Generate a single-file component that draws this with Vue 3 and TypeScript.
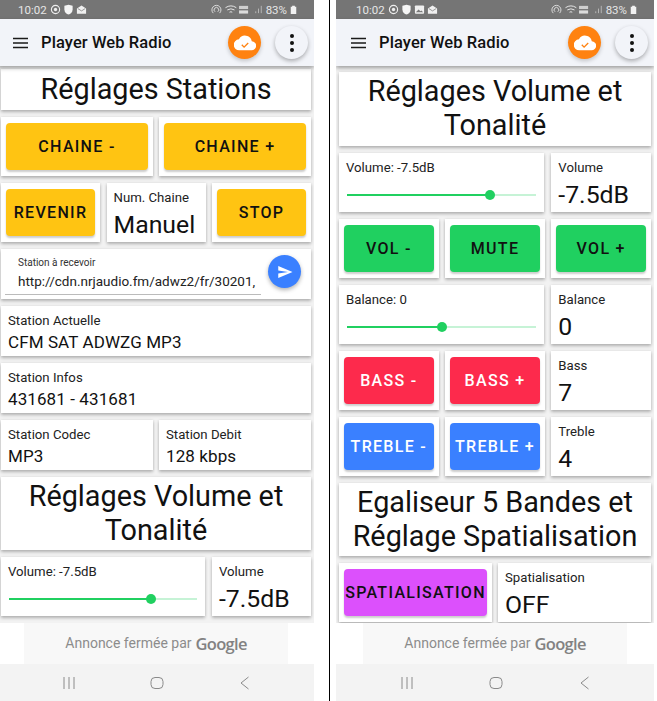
<script setup lang="ts">
const p1Status = ['timer', 'shield', 'mail']
const p2Status = ['timer', 'shield', 'image', 'mail']
</script>

<template>
  <div class="screen">
    <section class="phone first">
      <div class="status">
        <span class="clock">10:02</span>
        <svg v-for="i in p1Status" :key="i" class="sicon" viewBox="0 0 12 12"><use :href="'#s-' + i" /></svg>
        <span class="grow"></span>
        <svg class="sicon wide" viewBox="0 0 42 12">
          <path d="M2.500 10a5 5 0 1 1 7 0M4.500 8.500a2.600 2.600 0 1 1 3 0" fill="none" stroke="#e6e6e6" stroke-width="1" />
          <path d="M16 4q6-4 12 0M18 6.500q4-2.500 8 0M20.500 9q1.500-1 3 0" fill="none" stroke="#e6e6e6" stroke-width="1.100" />
          <rect x="31" y="2" width="10" height="3.500" fill="#cfcfcf" /><rect x="31" y="7" width="10" height="3.500" fill="#dcdcdc" />
        </svg>
        <svg class="sicon" viewBox="0 0 12 12"><path d="M3 10V8M6 10V5M9 10V2" stroke="#bbb" stroke-width="1" /></svg>
        <span class="batt">83%</span>
        <svg class="sicon bat" viewBox="0 0 12 12"><path d="M3 3h1.500V2h3v1H9v8H3z" fill="#f2f2f2" /></svg>
      </div>
      <header class="bar">
        <svg class="burger" viewBox="0 0 16 12"><path d="M0 1.500h15M0 6h15M0 10.500h15" stroke="#1a1a1a" stroke-width="1.500" /></svg>
        <span class="brand">Player Web Radio</span>
        <span class="grow"></span>
        <span class="round orange">
          <svg viewBox="0 0 24 24" class="cloud"><path d="M19.400 10A7.500 7.500 0 0 0 5.400 8 6 6 0 0 0 6 20h13a5 5 0 0 0 .4-10z" fill="#fff" /><path d="M8.500 14l2.500 2.500 4.500-4.500" fill="none" stroke="#ff8210" stroke-width="1.500" /></svg>
        </span>
        <span class="round pale"><i></i><i></i><i></i></span>
      </header>
      <main class="content">
        <div class="card title one">Réglages Stations</div>
        <div class="row two">
          <div class="card bc"><button class="btn amber">CHAINE -</button></div>
          <div class="card bc"><button class="btn amber">CHAINE +</button></div>
        </div>
        <div class="row three">
          <div class="card bc"><button class="btn amber">REVENIR</button></div>
          <div class="card val"><small>Num. Chaine</small><b>Manuel</b></div>
          <div class="card bc"><button class="btn amber">STOP</button></div>
        </div>
        <div class="card input">
          <div class="field">
            <label>Station à recevoir</label>
            <div class="url">http://cdn.nrjaudio.fm/adwz2/fr/30201,</div>
          </div>
          <span class="fab">
            <svg viewBox="0 0 24 24"><path d="M3 20l19-8L3 4v6l13 2-13 2z" fill="#fff" /></svg>
          </span>
        </div>
        <div class="card info"><small>Station Actuelle</small><em>CFM SAT ADWZG MP3</em></div>
        <div class="card info"><small>Station Infos</small><em>431681 - 431681</em></div>
        <div class="row two short">
          <div class="card info"><small>Station Codec</small><em>MP3</em></div>
          <div class="card info"><small>Station Debit</small><em>128 kbps</em></div>
        </div>
        <div class="card title">Réglages Volume et Tonalité</div>
        <div class="row twothree">
          <div class="card slider">
            <small>Volume: -7.5dB</small>
            <div class="track"><div class="fill" :style="{ width: '75.5%' }"></div><span class="thumb"></span></div>
          </div>
          <div class="card val"><small>Volume</small><b>-7.5dB</b></div>
        </div>
      </main>
      <div class="ad"><span class="adbox">Annonce fermée par <strong>Google</strong></span></div>
      <nav class="navb">
        <svg viewBox="0 0 14 14"><path d="M2 1v12M7 1v12M12 1v12" stroke="#8a8a8a" fill="none" stroke-width="1" /></svg>
        <svg viewBox="0 0 14 14"><rect x="1" y="1.500" width="12" height="11" rx="4" stroke="#8a8a8a" fill="none" stroke-width="1" /></svg>
        <svg viewBox="0 0 14 14"><path d="M10.500 1L3 7l7.500 6" stroke="#8a8a8a" fill="none" stroke-width="1" /></svg>
      </nav>
    </section>

    <div class="divider"></div>

    <section class="phone second">
      <div class="status">
        <span class="clock">10:02</span>
        <svg v-for="i in p2Status" :key="i" class="sicon" viewBox="0 0 12 12"><use :href="'#s-' + i" /></svg>
        <span class="grow"></span>
        <svg class="sicon wide" viewBox="0 0 42 12">
          <path d="M2.500 10a5 5 0 1 1 7 0M4.500 8.500a2.600 2.600 0 1 1 3 0" fill="none" stroke="#e6e6e6" stroke-width="1" />
          <path d="M16 4q6-4 12 0M18 6.500q4-2.500 8 0M20.500 9q1.500-1 3 0" fill="none" stroke="#e6e6e6" stroke-width="1.100" />
          <rect x="31" y="2" width="10" height="3.500" fill="#cfcfcf" /><rect x="31" y="7" width="10" height="3.500" fill="#dcdcdc" />
        </svg>
        <svg class="sicon" viewBox="0 0 12 12"><path d="M3 10V8M6 10V5M9 10V2" stroke="#bbb" stroke-width="1" /></svg>
        <span class="batt">83%</span>
        <svg class="sicon bat" viewBox="0 0 12 12"><path d="M3 3h1.500V2h3v1H9v8H3z" fill="#f2f2f2" /></svg>
      </div>
      <header class="bar">
        <svg class="burger" viewBox="0 0 16 12"><path d="M0 1.500h15M0 6h15M0 10.500h15" stroke="#1a1a1a" stroke-width="1.500" /></svg>
        <span class="brand">Player Web Radio</span>
        <span class="grow"></span>
        <span class="round orange">
          <svg viewBox="0 0 24 24" class="cloud"><path d="M19.400 10A7.500 7.500 0 0 0 5.400 8 6 6 0 0 0 6 20h13a5 5 0 0 0 .4-10z" fill="#fff" /><path d="M8.500 14l2.500 2.500 4.500-4.500" fill="none" stroke="#ff8210" stroke-width="1.500" /></svg>
        </span>
        <span class="round pale"><i></i><i></i><i></i></span>
      </header>
      <main class="content">
        <div class="card title top">Réglages Volume et Tonalité</div>
        <div class="row twothree">
          <div class="card slider">
            <small>Volume: -7.5dB</small>
            <div class="track"><div class="fill" :style="{ width: '75.5%' }"></div><span class="thumb"></span></div>
          </div>
          <div class="card val"><small>Volume</small><b>-7.5dB</b></div>
        </div>
        <div class="row three">
          <div class="card bc"><button class="btn green">VOL -</button></div>
          <div class="card bc"><button class="btn green">MUTE</button></div>
          <div class="card bc"><button class="btn green">VOL +</button></div>
        </div>
        <div class="row twothree">
          <div class="card slider">
            <small>Balance: 0</small>
            <div class="track"><div class="fill" :style="{ width: '50%' }"></div><span class="thumb"></span></div>
          </div>
          <div class="card val"><small>Balance</small><b>0</b></div>
        </div>
        <div class="row three">
          <div class="card bc"><button class="btn red">BASS -</button></div>
          <div class="card bc"><button class="btn red">BASS +</button></div>
          <div class="card val"><small>Bass</small><b>7</b></div>
        </div>
        <div class="row three">
          <div class="card bc"><button class="btn blue">TREBLE -</button></div>
          <div class="card bc"><button class="btn blue">TREBLE +</button></div>
          <div class="card val"><small>Treble</small><b>4</b></div>
        </div>
        <div class="card title">Egaliseur 5 Bandes et Réglage Spatialisation</div>
        <div class="row two">
          <div class="card bc"><button class="btn purple">SPATIALISATION</button></div>
          <div class="card val"><small>Spatialisation</small><b>OFF</b></div>
        </div>
      </main>
      <div class="ad"><span class="adbox">Annonce fermée par <strong>Google</strong></span></div>
      <nav class="navb">
        <svg viewBox="0 0 14 14"><path d="M2 1v12M7 1v12M12 1v12" stroke="#8a8a8a" fill="none" stroke-width="1" /></svg>
        <svg viewBox="0 0 14 14"><rect x="1" y="1.500" width="12" height="11" rx="4" stroke="#8a8a8a" fill="none" stroke-width="1" /></svg>
        <svg viewBox="0 0 14 14"><path d="M10.500 1L3 7l7.500 6" stroke="#8a8a8a" fill="none" stroke-width="1" /></svg>
      </nav>
    </section>

    <svg class="defs" width="0" height="0">
      <symbol id="s-timer" viewBox="0 0 12 12"><circle cx="6" cy="6" r="4.500" fill="none" stroke="#eee" stroke-width="1.200" /><circle cx="6" cy="6" r="1.800" fill="#eee" /></symbol>
      <symbol id="s-shield" viewBox="0 0 12 12"><path d="M1.500 2L6 .8 10.500 2v4c0 3-2.500 5-4.500 5.500C4 11 1.500 9 1.500 6z" fill="#f5f5f5" /></symbol>
      <symbol id="s-image" viewBox="0 0 12 12"><rect x="1" y="1.500" width="10" height="9" rx="1" fill="#f0f0f0" /><path d="M2 9l3-3 2 2 1-1 2 2z" fill="#777" /></symbol>
      <symbol id="s-mail" viewBox="0 0 12 12"><path d="M1 5l5-3.500L11 5v5.500H1z" fill="#f0f0f0" /><path d="M2 5l4 2.500L10 5" fill="none" stroke="#777" stroke-width=".8" /></symbol>
    </svg>
  </div>
</template>

<style>
html, body { margin: 0; background: #fff; }
</style>

<style scoped>
.screen { display: flex; width: 657px; height: 701px; overflow: hidden; background: #fff; font-family: Roboto, "Liberation Sans", sans-serif; color: #111; }
.phone { flex: none; height: 701px; display: flex; flex-direction: column; overflow: hidden; background: #f2f2f2; position: relative; }
.first { width: 316px; margin-left: -2px; }
.second { width: 318px; }
.divider { flex: none; width: 1.500px; height: 701px; margin: 0 6px 0 14.500px; background: #000; }
.status { flex: none; height: 19px; background: #757575; display: flex; align-items: center; gap: 2px; padding: 0 15px 0 20px; color: #e6e6e6; font-size: 12px; }
.clock { margin-right: 1px; font-size: 11.500px; }
.sicon { width: 11px; height: 11px; }
.sicon.wide { width: 38px; margin-right: 2px; }
.sicon.bat { margin-left: -1px; }
.defs { position: absolute; }
.batt { font-size: 11.500px; }
.grow { flex: 1; }
.bar { flex: none; height: 47px; background: #f2f4f9; display: flex; align-items: center; padding: 0 6px 0 15px; box-shadow: 0 2px 4px rgba(0,0,0,.35); position: relative; z-index: 2; }
.burger { width: 16px; height: 12px; margin-right: 12px; }
.brand { font-size: 16.500px; font-weight: 500; letter-spacing: .1px; }
.round { width: 33px; height: 33px; border-radius: 50%; display: flex; align-items: center; justify-content: center; }
.orange { background: #ff8210; margin-right: 14px; box-shadow: 0 2px 4px rgba(0,0,0,.2); }
.cloud { width: 22px; height: 22px; }
.pale { background: #f2f4f9; flex-direction: column; gap: 3px; box-shadow: 0 2px 4px rgba(0,0,0,.3); }
.pale i { display: block; width: 4px; height: 4px; border-radius: 50%; background: #111; }
.content { flex: 1; min-height: 0; overflow: hidden; padding: 3px 3px 0; display: flex; flex-direction: column; gap: 7px; box-sizing: border-box; }
.card { background: #fff; box-shadow: 0 2px 3px rgba(0,0,0,.25), 0 0 3px rgba(0,0,0,.08); box-sizing: border-box; }
.title { flex: none; font-size: 28.800px; line-height: 34px; text-align: center; padding: 2px 4px 0; height: 73px; }
.title.one { height: 41px; padding-top: 3px; }
.title.top { margin-top: 3px; height: 74px; }
.row { flex: none; display: grid; gap: 6px; height: 59px; }
.row.short { height: 50px; }
.two { grid-template-columns: 1fr 1fr; }
.three { grid-template-columns: 1fr 1fr 1fr; gap: 6.500px; }
.twothree { grid-template-columns: 2.060fr 1fr; gap: 7px; }
.bc { padding: 6px 5px; }
.btn { display: block; width: 100%; height: 47px; border: 0; border-radius: 4px; font: 500 16px Roboto, sans-serif; letter-spacing: 1.300px; padding: 0; color: #111; box-shadow: 0 2px 2px rgba(0,0,0,.2); white-space: nowrap; }
.amber { background: #ffc412; }
.green { background: #20d060; }
.red { background: #fd2a4c; color: #fff; }
.blue { background: #3a80ff; color: #fff; }
.purple { background: #dc50fc; }
.val { padding: 7px 7px 0; }
.val small { display: block; font-size: 13.200px; line-height: 16px; color: #222; }
.val b { display: block; font-weight: 400; font-size: 24.800px; line-height: 30px; margin-top: 4px; }
.input { flex: none; height: 50px; display: flex; padding: 0 8px 0 4px; position: relative; }
.field { width: 256px; flex: none; border-bottom: 1px solid #bbb; margin-bottom: 4px; box-sizing: border-box; padding: 8px 0 0 13px; overflow: hidden; }
.field label { display: block; font-size: 10px; line-height: 12px; color: #333; }
.url { font-size: 13.500px; line-height: 20px; margin-top: 2px; white-space: nowrap; color: #222; letter-spacing: 0; }
.fab { width: 33px; height: 33px; border-radius: 50%; background: #3a80ff; display: flex; align-items: center; justify-content: center; margin: 6px 0 0 7px; box-shadow: 0 2px 4px rgba(0,0,0,.3); }
.fab svg { width: 18px; height: 18px; }
.info { flex: none; height: 50px; padding: 7px 7px 0; }
.info small { display: block; font-size: 13.200px; line-height: 16px; color: #222; }
.info em { display: block; font-style: normal; font-size: 17px; line-height: 22px; margin-top: 2px; letter-spacing: .1px; }
.slider { padding: 7px 7px 0; }
.slider small { display: block; font-size: 13.200px; line-height: 16px; color: #222; }
.track { height: 2px; background: #c6f3d6; margin: 18px 1px 0; position: relative; display: flex; align-items: center; }
.fill { height: 2px; background: #20d060; }
.thumb { width: 10px; height: 10px; border-radius: 50%; background: #20d060; flex: none; margin-left: -5px; }
.ad { flex: none; height: 41px; background: #fff; display: flex; justify-content: center; position: relative; z-index: 3; }
.adbox { width: 264px; background: #f8f8f8; color: #8c8c8c; font-size: 14px; display: flex; align-items: center; justify-content: center; gap: 4px; padding-bottom: 1px; box-sizing: border-box; }
.adbox strong { font-weight: 600; font-size: 16.500px; color: #828282; font-family: "Open Sans", sans-serif; letter-spacing: -.7px; }
.navb { flex: none; height: 37px; background: #f3f3f3; display: flex; align-items: center; justify-content: space-around; padding: 0 25px 0 27px; position: relative; z-index: 3; }
.navb svg { width: 14px; height: 14px; }
</style>
